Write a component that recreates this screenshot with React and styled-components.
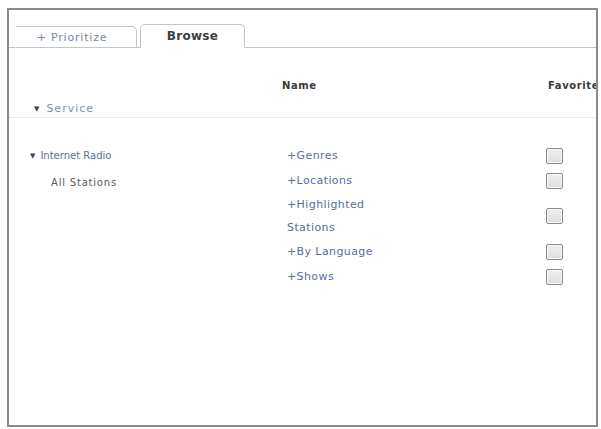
import {createGlobalStyle, styled} from 'styled-components'

const GlobalStyle = createGlobalStyle`
  body {
    margin: 0;
    background: #ffffff;
    font-family: "DejaVu Sans", Verdana, sans-serif;
  }
`

const Frame = styled.div`
  box-sizing: border-box;
  margin: 8px 0 0 7px;
  width: 591px;
  height: 419px;
  border: 2px solid #8a8a8a;
  background: #fff;
  overflow: hidden;
`

const TabBar = styled.div`
  display: flex;
  align-items: flex-end;
  gap: 3px;
  padding: 14px 0 0 6px;
  border-bottom: 1px solid #c4c4c4;
`

const Tab = styled.div`
  box-sizing: border-box;
  height: ${p => (p.$active ? 24 : 22)}px;
  width: ${p => (p.$active ? 105 : 122)}px;
  margin-bottom: -1px;
  display: flex;
  align-items: center;
  justify-content: center;
  font-size: ${p => (p.$active ? 12 : 11)}px;
  letter-spacing: ${p => (p.$active ? 0.3 : 0.8)}px;
  font-weight: ${p => (p.$active ? 'bold' : 'normal')};
  color: ${p => (p.$active ? '#3e3e3e' : '#7886a8')};
  background: #fff;
  border: 1px solid #c4c4c4;
  border-bottom-color: ${p => (p.$active ? '#fff' : '#c4c4c4')};
  border-left-color: ${p => (p.$active ? '#c4c4c4' : '#fff')};
  border-radius: ${p => (p.$active ? '5px 5px 0 0' : '0 5px 0 0')};
  padding-right: ${p => (p.$active ? 0 : 8)}px;
`

const Head = styled.div`
  display: grid;
  grid-template-columns: 252px 263px 1fr;
  padding: 32px 0 0 21px;
  height: 70px;
  box-sizing: border-box;
  border-bottom: 1px dotted #d6d6d6;
`

const HeadCell = styled.div`
  font-size: 10px;
  font-weight: bold;
  letter-spacing: 0.6px;
  color: #3a3a3a;
  padding-left: ${p => p.$pad || 0}px;
  white-space: nowrap;
`

const ServiceCell = styled.div`
  padding-top: 22px;
  padding-left: 4px;
  font-size: 11px;
  letter-spacing: 1px;
  color: #8390ae;
`

const Caret = styled.span`
  display: inline-block;
  color: #444;
  font-size: 7px;
  letter-spacing: 0;
  margin-right: ${p => p.$gap || 5}px;
  vertical-align: 1px;
`

const Rows = styled.div`
  display: grid;
  grid-template-columns: 252px 263px 1fr;
  grid-auto-rows: minmax(25px, auto);
  padding: 25px 0 0 21px;
`

const TreeCell = styled.div`
  display: flex;
  align-items: center;
  font-size: 10px;
  letter-spacing: ${p => (p.$link ? 0 : 0.8)}px;
  color: ${p => (p.$link ? '#5c6c9c' : '#5a5a5a')};
  padding-left: ${p => (p.$indent ? 21 : 0)}px;
  padding-top: ${p => (p.$indent ? 3 : 0)}px;
`

const NameCell = styled.div`
  display: flex;
  align-items: center;
  width: 96px;
  padding-left: 5px;
  font-size: 11px;
  letter-spacing: 0.4px;
  line-height: 23px;
  color: #5c6c9c;
`

const FavCell = styled.div`
  display: flex;
  align-items: center;
  padding-left: 1px;
`

const Box = styled.span`
  box-sizing: border-box;
  width: 17px;
  height: 16px;
  border: 1px solid #8c8c8c;
  border-radius: 2px;
  background: linear-gradient(#eef0f0, #dcdfdf);
  box-shadow: inset 0 0 0 1px #f6f6f6;
`

const stations = ['Genres', 'Locations', 'Highlighted Stations', 'By Language', 'Shows']

export default function App() {
  return (
    <>
      <GlobalStyle />
      <Frame>
        <TabBar>
          <Tab>+ Prioritize</Tab>
          <Tab $active>Browse</Tab>
        </TabBar>
        <Head>
          <ServiceCell>
            <Caret $gap={7}>▼</Caret>Service
          </ServiceCell>
          <HeadCell>Name</HeadCell>
          <HeadCell $pad={3}>Favorite</HeadCell>
        </Head>
        <Rows>
          {stations.map((name, i) => (
            <Row key={name} index={i} name={name} />
          ))}
        </Rows>
      </Frame>
    </>
  )
}

function Row({index, name}) {
  let tree = <TreeCell />
  if (index === 0)
    tree = (
      <TreeCell $link>
        <Caret>▼</Caret>Internet Radio
      </TreeCell>
    )
  if (index === 1) tree = <TreeCell $indent>All Stations</TreeCell>

  return (
    <>
      {tree}
      <NameCell>{`+${name}`}</NameCell>
      <FavCell>
        <Box />
      </FavCell>
    </>
  )
}
